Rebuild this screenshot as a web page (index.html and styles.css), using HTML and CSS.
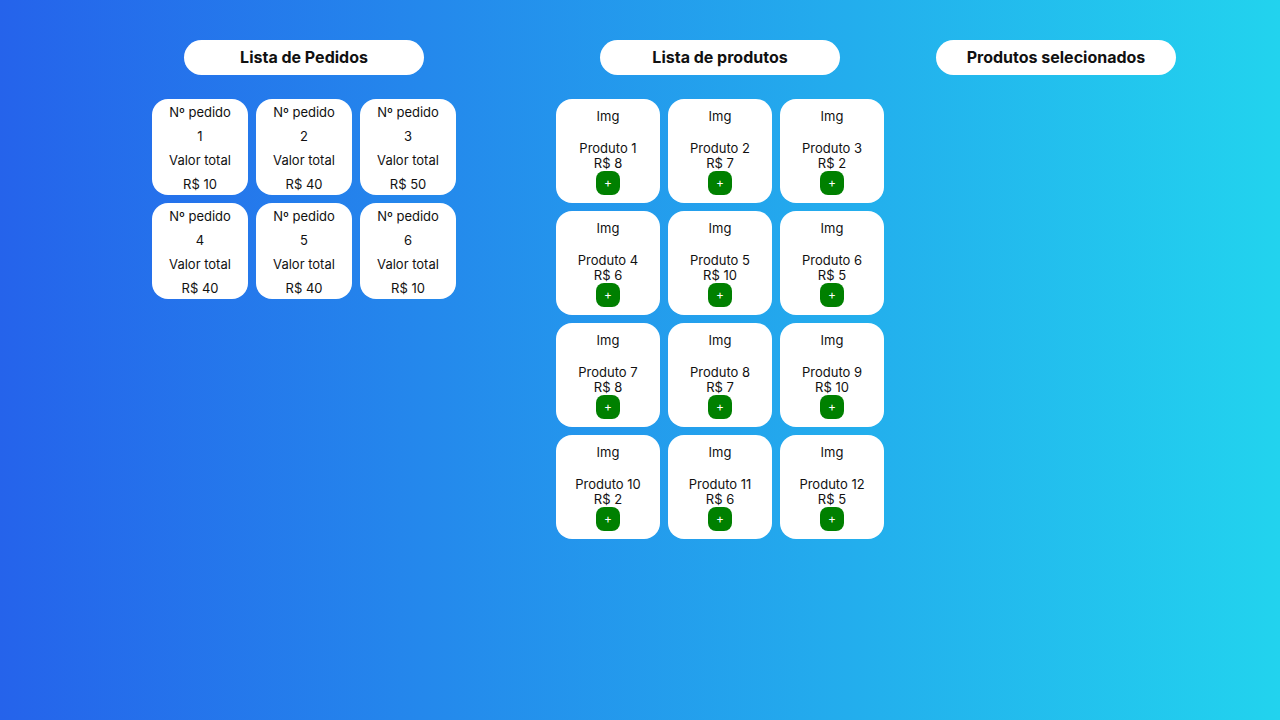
FILE: index.html
```html
<!DOCTYPE html>
<html lang="pt-BR">
<head>
<meta charset="utf-8">
<title>Pedidos</title>
<link rel="stylesheet" href="styles.css">
</head>
<body>
<main class="page">
  <section class="col col-orders">
    <h2 class="pill">Lista de Pedidos</h2>
    <div class="orders">
      <div class="order"><p>Nº pedido</p><p>1</p><p>Valor total</p><p>R$ 10</p></div>
      <div class="order"><p>Nº pedido</p><p>2</p><p>Valor total</p><p>R$ 40</p></div>
      <div class="order"><p>Nº pedido</p><p>3</p><p>Valor total</p><p>R$ 50</p></div>
      <div class="order"><p>Nº pedido</p><p>4</p><p>Valor total</p><p>R$ 40</p></div>
      <div class="order"><p>Nº pedido</p><p>5</p><p>Valor total</p><p>R$ 40</p></div>
      <div class="order"><p>Nº pedido</p><p>6</p><p>Valor total</p><p>R$ 10</p></div>
    </div>
  </section>
  <section class="col col-products">
    <h2 class="pill">Lista de produtos</h2>
    <div class="products">
      <div class="product"><p class="img">Img</p><p>Produto 1</p><p class="price">R$ 8</p><button class="add">+</button></div>
      <div class="product"><p class="img">Img</p><p>Produto 2</p><p class="price">R$ 7</p><button class="add">+</button></div>
      <div class="product"><p class="img">Img</p><p>Produto 3</p><p class="price">R$ 2</p><button class="add">+</button></div>
      <div class="product"><p class="img">Img</p><p>Produto 4</p><p class="price">R$ 6</p><button class="add">+</button></div>
      <div class="product"><p class="img">Img</p><p>Produto 5</p><p class="price">R$ 10</p><button class="add">+</button></div>
      <div class="product"><p class="img">Img</p><p>Produto 6</p><p class="price">R$ 5</p><button class="add">+</button></div>
      <div class="product"><p class="img">Img</p><p>Produto 7</p><p class="price">R$ 8</p><button class="add">+</button></div>
      <div class="product"><p class="img">Img</p><p>Produto 8</p><p class="price">R$ 7</p><button class="add">+</button></div>
      <div class="product"><p class="img">Img</p><p>Produto 9</p><p class="price">R$ 10</p><button class="add">+</button></div>
      <div class="product"><p class="img">Img</p><p>Produto 10</p><p class="price">R$ 2</p><button class="add">+</button></div>
      <div class="product"><p class="img">Img</p><p>Produto 11</p><p class="price">R$ 6</p><button class="add">+</button></div>
      <div class="product"><p class="img">Img</p><p>Produto 12</p><p class="price">R$ 5</p><button class="add">+</button></div>
    </div>
  </section>
  <section class="col col-selected">
    <h2 class="pill">Produtos selecionados</h2>
  </section>
</main>
</body>
</html>
```
FILE: styles.css
```css
* { box-sizing: border-box; }
html, body { margin: 0; height: 100%; }
body {
  font-family: Inter, "Noto Sans", sans-serif;
  color: #111;
  background: linear-gradient(to right, #2563eb, #22d3ee);
  min-height: 720px;
}
.page {
  display: flex;
  align-items: flex-start;
  padding: 40px 0 0 152px;
}
.col {
  display: flex;
  flex-direction: column;
  align-items: center;
  gap: 24px;
}
.col-orders { width: 304px; }
.col-products { width: 328px; margin-left: 100px; }
.col-selected { width: 240px; margin-left: 52px; }
.pill {
  margin: 0;
  width: 240px;
  height: 35px;
  background: #fff;
  border-radius: 18px;
  font-size: 16px;
  font-weight: 700;
  line-height: 35px;
  text-align: center;
  color: #111;
}
.orders {
  display: grid;
  grid-template-columns: repeat(3, 96px);
  gap: 8px;
}
.order {
  height: 96px;
  padding-top: 1px;
  background: #fff;
  border-radius: 16px;
  text-align: center;
  font-size: 13px;
}
.order p { margin: 0; line-height: 24px; }
.products {
  display: grid;
  grid-template-columns: repeat(3, 104px);
  gap: 8px;
}
.product {
  height: 104px;
  background: #fff;
  border-radius: 16px;
  padding-top: 9px;
  display: flex;
  flex-direction: column;
  align-items: center;
  font-size: 13px;
}
.product p { margin: 0; line-height: 16px; }
.product .img { margin-bottom: 16px; }
.product .price { line-height: 15px; }
.add {
  width: 24px;
  height: 24px;
  padding: 0;
  border: none;
  border-radius: 8px;
  background: #008000;
  color: #fff;
  font-family: Inter, sans-serif;
  font-size: 12px;
  line-height: 24px;
}
```
